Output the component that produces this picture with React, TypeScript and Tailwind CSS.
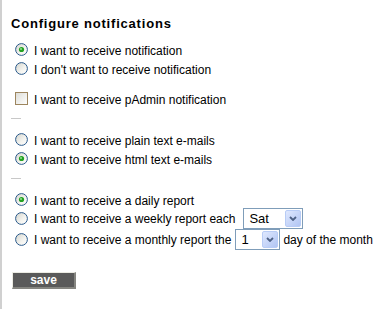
import React from "react";

function Radio({ checked }: { checked?: boolean }) {
  return (
    <svg width="13" height="13" viewBox="0 0 13 13" className="shrink-0 block">
      <defs>
        <linearGradient id="radioFill" x1="0" y1="0" x2="1" y2="1">
          <stop offset="0" stopColor="#d4d4cc" />
          <stop offset="0.6" stopColor="#f4f4f0" />
          <stop offset="1" stopColor="#ffffff" />
        </linearGradient>
      </defs>
      <circle cx="6.5" cy="6.5" r="5.9" fill="url(#radioFill)" stroke="#2a5a8c" strokeWidth="1" />
      {checked && (
        <>
          <circle cx="6.5" cy="6.5" r="2.6" fill="#21a121" />
          <circle cx="6" cy="6" r="1.1" fill="#8fe08f" />
        </>
      )}
    </svg>
  );
}

function Checkbox() {
  return (
    <svg width="13" height="13" viewBox="0 0 13 13" className="shrink-0 block">
      <defs>
        <linearGradient id="cbFill" x1="0" y1="0" x2="1" y2="1">
          <stop offset="0" stopColor="#dcdcd6" />
          <stop offset="1" stopColor="#ffffff" />
        </linearGradient>
      </defs>
      <rect x="0.5" y="0.5" width="12" height="12" fill="url(#cbFill)" stroke="#4a6a8c" strokeWidth="1" />
      <rect x="0.5" y="0.5" width="12" height="12" fill="none" stroke="#f0a030" strokeWidth="1" strokeDasharray="1 1" />
    </svg>
  );
}

function Select({ value, width }: { value: string; width: string }) {
  return (
    <div
      className={`${width} h-[21px] border border-[#7f9db9] bg-white flex items-center justify-between p-px shrink-0`}
    >
      <span className="pl-[4px] text-[13px] leading-[15px] text-black">{value}</span>
      <div className="w-[16px] h-[17px] rounded-[2px] border border-[#b8ccf6] bg-gradient-to-br from-[#dfe8fe] to-[#b1c5f3] flex items-center justify-center">
        <svg width="8" height="5" viewBox="0 0 8 5" className="block">
          <path d="M1 1 L4 4 L7 1" fill="none" stroke="#4d6185" strokeWidth="1.8" />
        </svg>
      </div>
    </div>
  );
}

function Row({
  children,
  h = "h-[19px]",
}: {
  children: React.ReactNode;
  h?: string;
}) {
  return <div className={`flex items-center ${h} whitespace-nowrap`}>{children}</div>;
}

function Label({ children, pt = "pt-[4px]" }: { children: React.ReactNode; pt?: string }) {
  return <span className={`${pt} leading-[13px] ml-[6px]`}>{children}</span>;
}

export default function App() {
  return (
    <div className="min-h-screen bg-white font-['Liberation_Sans',Arial,sans-serif] text-black text-[12px]">
      <div className="min-h-[309px] border-l-2 border-[#d0d0d0] pl-[9px] pt-[16px]">
        <div className="text-[13px] font-bold leading-[15px] h-[15px] tracking-[0.8px]">
          Configure notifications
        </div>

        <div className="mt-[9px] pl-[4px]">
          <Row>
            <Radio checked />
            <Label>I want to receive notification</Label>
          </Row>
          <Row>
            <Radio />
            <Label>I don't want to receive notification</Label>
          </Row>
        </div>

        <div className="mt-[11px] pl-[4px]">
          <Row>
            <Checkbox />
            <Label>I want to receive pAdmin notification</Label>
          </Row>
        </div>

        <div className="mt-[10px] w-[10px] h-px bg-[#c8c8c8]" />

        <div className="mt-[11px] pl-[4px]">
          <Row>
            <Radio />
            <Label>I want to receive plain text e-mails</Label>
          </Row>
          <Row>
            <Radio checked />
            <Label>I want to receive html text e-mails</Label>
          </Row>
        </div>

        <div className="mt-[10px] w-[10px] h-px bg-[#c8c8c8]" />

        <div className="mt-[11px] pl-[4px]">
          <Row h="h-[18px]">
            <Radio checked />
            <Label>I want to receive a daily report</Label>
          </Row>
          <Row h="h-[21px]">
            <Radio />
            <Label pt="pt-[2px]">I want to receive a weekly report each</Label>
            <div className="ml-[8px]">
              <Select value="Sat" width="w-[60px]" />
            </div>
          </Row>
          <Row h="h-[21px]">
            <Radio />
            <Label pt="pt-[2px]">I want to receive a monthly report the</Label>
            <div className="ml-[4px]">
              <Select value="1" width="w-[45px]" />
            </div>
            <span className="pt-[2px] leading-[13px] ml-[3px]">day of the month</span>
          </Row>
        </div>

        <button
          type="button"
          className="mt-[22px] ml-[1px] w-[64px] h-[17px] bg-[#5a5a5a] border-t border-l border-t-[#ecece4] border-l-[#ecece4] border-b-2 border-r-2 border-b-[#858580] border-r-[#858580] text-white font-bold text-[12px] leading-[13px] flex items-center justify-center"
        >
          save
        </button>
      </div>
    </div>
  );
}
